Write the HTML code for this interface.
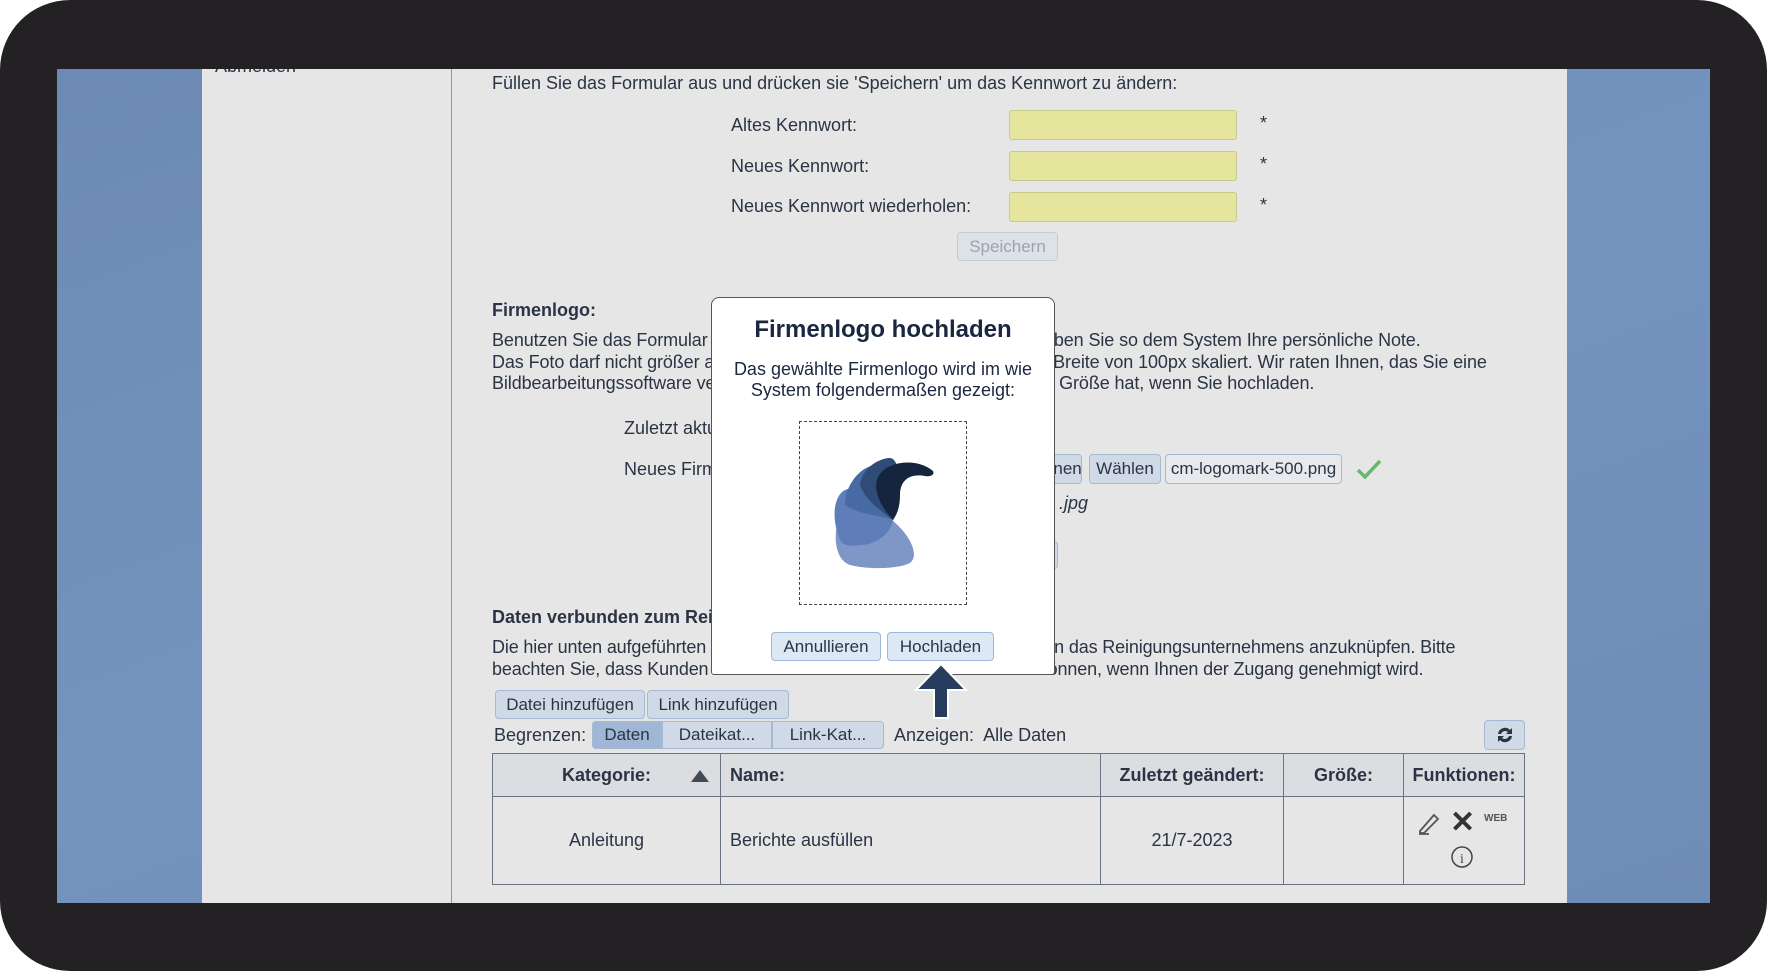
<!DOCTYPE html><html><head><meta charset="utf-8"><style>
*{box-sizing:border-box;margin:0;padding:0}
body{width:1767px;height:971px;background:#fff;overflow:hidden;font-family:"Liberation Sans",sans-serif;color:#2b3444;font-size:18px}
.frame{position:absolute;left:0;top:0;width:1767px;height:971px;background:#232123;border-radius:70px}
.screen{position:absolute;left:57px;top:69px;width:1653px;height:834px;background:linear-gradient(160deg,#6c8ab3,#7394bf 50%,#6d8cb6);overflow:hidden}
.a{position:absolute;white-space:nowrap}
.side{position:absolute;left:145px;top:0;width:249px;height:834px;background:#e6e6e6}
.main{position:absolute;left:394px;top:0;width:1116px;height:834px;background:#e6e6e6;border-left:1px solid #8a97aa}
.inp{position:absolute;background:#e6e59d;border:1px solid #c9c98a;border-radius:3px}
.btn{position:absolute;background:#cfdae6;border:1px solid #a5b9d2;border-radius:4px;text-align:center;font-size:17px;color:#2b3444}
table{position:absolute;border-collapse:collapse}
td,th{border:1.5px solid #6a7382;font-size:18px}
th{background:#dcdde0;font-weight:bold;height:43px}
</style></head><body>
<div class="frame"></div>
<div class="screen">
<div class="side"><div class="a" style="left:13px;top:-13px;font-size:18px">Abmelden</div></div>
<div class="main"></div>
</div>
<div style="position:absolute;left:0;top:0">
<div class="a" style="left:492px;top:73px">Füllen Sie das Formular aus und drücken sie 'Speichern' um das Kennwort zu ändern:</div>
<div class="a" style="left:731px;top:115px">Altes Kennwort:</div>
<div class="a" style="left:731px;top:156px">Neues Kennwort:</div>
<div class="a" style="left:731px;top:196px">Neues Kennwort wiederholen:</div>
<div class="inp" style="left:1009px;top:110px;width:228px;height:30px"></div>
<div class="inp" style="left:1009px;top:151px;width:228px;height:30px"></div>
<div class="inp" style="left:1009px;top:192px;width:228px;height:30px"></div>
<div class="a" style="left:1260px;top:113px">*</div>
<div class="a" style="left:1260px;top:154px">*</div>
<div class="a" style="left:1260px;top:195px">*</div>
<div class="btn" style="left:957px;top:232px;width:101px;height:29px;line-height:27px;color:#9aa3ae;background:#dde2e8;border-color:#c2ccd8">Speichern</div>
<div class="a" style="left:492px;top:300px;font-weight:bold">Firmenlogo:</div>
<div class="a" style="left:492px;top:330px;line-height:21.5px;letter-spacing:-0.1px">Benutzen Sie das Formular unten um das Firmenlogo hochzuladen. Geben Sie so dem System Ihre persönliche Note.<br>Das Foto darf nicht größer als 2 MB sein. Es wird automatisch auf eine Breite von 100px skaliert. Wir raten Ihnen, das Sie eine<br>Bildbearbeitungssoftware verwenden, damit das Bild bereits die richtige Größe hat, wenn Sie hochladen.</div>
<div class="a" style="left:624px;top:418px">Zuletzt aktualisiert:</div>
<div class="a" style="left:624px;top:459px">Neues Firmenlogo:</div>
<div class="btn" style="left:1030px;top:454px;width:52px;height:30px;line-height:28px">Öffnen</div>
<div class="btn" style="left:1089px;top:454px;width:72px;height:30px;line-height:28px">Wählen</div>
<div class="btn" style="left:1165px;top:454px;width:177px;height:30px;line-height:28px;background:#e8e9ec">cm-logomark-500.png</div>
<svg class="a" style="left:1356px;top:458px" width="26" height="22" viewBox="0 0 26 22"><path d="M2 12 L9 19 L24 3" stroke="#6db46d" stroke-width="3.5" fill="none"/></svg>
<div class="a" style="left:1059px;top:493px;font-style:italic">.jpg</div>
<div class="btn" style="left:1000px;top:541px;width:58px;height:28px"></div>
<div class="a" style="left:492px;top:607px;font-weight:bold">Daten verbunden zum Reinigungsunternehmen:</div>
<div class="a" style="left:492px;top:637px;line-height:21.5px;letter-spacing:-0.15px">Die hier unten aufgeführten Daten sind Dokumente, die Sie wünschen an das Reinigungsunternehmens anzuknüpfen. Bitte<br>beachten Sie, dass Kunden die Dokumente sehen und herunterladen können, wenn Ihnen der Zugang genehmigt wird.</div>
<div class="btn" style="left:495px;top:690px;width:150px;height:29px;line-height:27px">Datei hinzufügen</div>
<div class="btn" style="left:647px;top:690px;width:142px;height:29px;line-height:27px">Link hinzufügen</div>
<div class="a" style="left:494px;top:725px">Begrenzen:</div>
<div class="btn" style="left:592px;top:721px;width:70px;height:28px;line-height:26px;background:#9fb6d4;border-radius:4px 0 0 4px">Daten</div>
<div class="btn" style="left:662px;top:721px;width:110px;height:28px;line-height:26px;border-radius:0">Dateikat...</div>
<div class="btn" style="left:772px;top:721px;width:112px;height:28px;line-height:26px;border-radius:0 4px 4px 0">Link-Kat...</div>
<div class="a" style="left:894px;top:725px">Anzeigen:&nbsp; Alle Daten</div>
<div class="btn" style="left:1484px;top:720px;width:41px;height:30px"><svg width="24" height="24" viewBox="0 0 24 24" style="margin-top:2px"><path d="M5 11a7 7 0 0 1 12-4l2-2v6h-6l2-2a4.5 4.5 0 0 0-7 2zM19 13a7 7 0 0 1-12 4l-2 2v-6h6l-2 2a4.5 4.5 0 0 0 7-2z" fill="#2b3444"/></svg></div>
<table style="left:492px;top:753px;width:1033px">
<tr><th style="width:228px;position:relative">Kategorie:<svg style="position:absolute;right:10px;top:15px" width="20" height="14"><path d="M10 1L19 13H1z" fill="#444b58"/></svg></th><th style="width:380px;text-align:left;padding-left:9px">Name:</th><th style="width:183px">Zuletzt geändert:</th><th style="width:120px">Größe:</th><th>Funktionen:</th></tr>
<tr style="height:88px"><td style="text-align:center">Anleitung</td><td style="padding-left:9px">Berichte ausfüllen</td><td style="text-align:center">21/7-2023</td><td></td><td style="position:relative">
<svg style="position:absolute;left:12px;top:14px" width="26" height="24" viewBox="0 0 26 24"><path d="M4 20L18 4l4 4L8 22H4z M3 23h10" stroke="#555" stroke-width="1.8" fill="none"/></svg>
<div style="position:absolute;left:46px;top:8px;font-size:30px;font-weight:bold;color:#333">✕</div>
<div style="position:absolute;left:80px;top:16px;font-size:10px;color:#555;font-weight:bold">WEB</div>
<svg style="position:absolute;left:46px;top:48px" width="24" height="24"><circle cx="12" cy="12" r="10" stroke="#444" stroke-width="1.5" fill="none"/><text x="12" y="18" font-size="14" text-anchor="middle" fill="#444" font-family="Liberation Serif">i</text></svg>
</td></tr></table>
<!-- dialog -->
<div style="position:absolute;left:711px;top:297px;width:344px;height:378px;background:#fff;border:1.5px solid #555;border-radius:8px 8px 3px 3px"></div>
<div class="a" style="left:711px;width:344px;text-align:center;top:316px;font-size:24px;font-weight:bold;color:#1b2640">Firmenlogo hochladen</div>
<div class="a" style="left:711px;width:344px;text-align:center;top:359px;font-size:18px;line-height:21px;color:#1b2640">Das gewählte Firmenlogo wird im wie<br>System folgendermaßen gezeigt:</div>
<div style="position:absolute;left:799px;top:421px;width:168px;height:184px;border:1.5px dashed #444"></div>
<svg class="a" style="left:830px;top:455px" width="110" height="120" viewBox="0 0 110 120">
<path d="M20 110C5 105 2 80 10 60C20 45 50 45 62 65C80 80 90 100 80 108C65 115 35 114 20 110z" fill="#7f97c6"/>
<path d="M10 85C0 60 5 40 15 35C30 28 55 40 63 65C60 80 45 90 30 90C20 92 12 90 10 85z" fill="#5f7db8"/>
<path d="M15 50C15 30 30 12 45 10C58 8 65 30 63 65C50 60 30 60 15 50z" fill="#486aa3"/>
<path d="M30 30C32 15 45 5 58 3C68 2 72 15 63 65C50 55 35 45 30 30z" fill="#2f4b78"/>
<path d="M63 65C45 45 40 25 55 14C68 5 90 5 103 16C105 20 100 22 95 21C80 18 70 25 70 40C70 50 68 58 63 65z" fill="#16253e"/>
</svg>
<div class="btn" style="left:771px;top:632px;width:110px;height:29px;line-height:27px;background:#dde8f5;border-color:#9fb8d8">Annullieren</div>
<div class="btn" style="left:887px;top:632px;width:107px;height:29px;line-height:27px;background:#dde8f5;border-color:#9fb8d8">Hochladen</div>
<svg class="a" style="left:914px;top:662px" width="54" height="58"><path d="M27 2L52 28H34V56H20V28H2z" fill="#263d5e" stroke="#fff" stroke-width="2"/></svg>
</div>
</body></html>
